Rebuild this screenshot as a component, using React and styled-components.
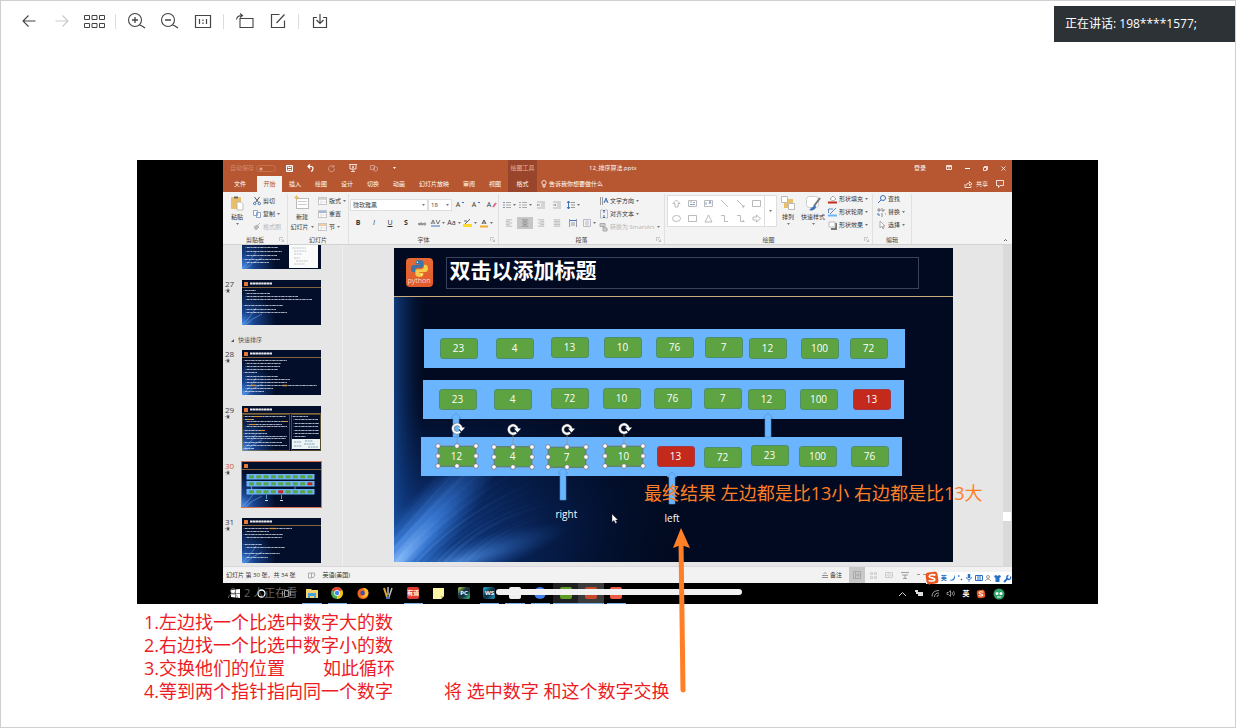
import React from "react";
import styled, { createGlobalStyle, css } from "styled-components";

const GlobalStyle = createGlobalStyle`
  * { box-sizing: border-box; }
  body {
    margin: 0;
    background: #fff;
    font-family: "Open Sans", "Noto Sans CJK SC", sans-serif;
  }
  button, select, input {
    font: inherit;
    color: inherit;
    margin: 0;
    padding: 0;
    border: 0;
    background: none;
    border-radius: 0;
  }
  svg { display: block; flex: none; overflow: visible; }
`;

/* ---------- viewer shell ---------- */

const Page = styled.main`
  position: relative;
  min-height: 100vh;
  border: 1px solid #cfcfcf;
  overflow: hidden;
`;

const Toolbar = styled.header`
  display: flex;
  align-items: center;
  height: 40px;
  padding-left: 11px;
  color: #444;
`;

const ToolButton = styled.button`
  display: flex;
  align-items: center;
  justify-content: center;
  width: 33px;
  height: 32px;
  color: ${(p) => (p.disabled ? "#c9c9c9" : "#444")};
`;

const ToolDivider = styled.span`
  width: 1px;
  height: 15px;
  margin: 0 4px;
  background: #dcdcdc;
`;

const Speaking = styled.aside`
  position: absolute;
  top: 5px;
  right: -1px;
  width: 182px;
  padding: 0 11px;
  background: #2d3236;
  color: #fff;
  font-size: 12px;
  line-height: 36px;
  white-space: nowrap;
`;

const Stage = styled.section`
  position: relative;
  width: 100%;
  max-width: 962px;
  margin: 119px auto 0;
`;

const Frame = styled.div`
  display: flex;
  justify-content: center;
  margin-right: 1px;
  padding: 0 86px;
  background: #000;
`;

const Notes = styled.div`
  padding: 7px 7px 0;
  color: #ed1c24;
  font-size: 18px;
  line-height: 23px;
  white-space: pre;
`;

const NoteLine = styled.p`
  display: flex;
  gap: ${(p) => p.$gap || 0}px;
  margin: 0;
`;

const Result = styled.p`
  position: absolute;
  left: 507px;
  top: 322px;
  margin: 0;
  color: #ff7f27;
  font-size: 18px;
  line-height: 23px;
  white-space: nowrap;
`;

const Pointer = styled.svg`
  position: absolute;
  left: 534px;
  top: 368px;
`;

/* ---------- presentation window ---------- */

const Desktop = styled.div`
  position: relative;
  display: flex;
  flex-direction: column;
  width: 100%;
  font-size: 6px;
  line-height: 8px;
  color: #333;
  white-space: nowrap;
`;

const TitleBar = styled.div`
  display: flex;
  height: 16px;
  background: #b65732;
  color: #fff;
`;

const QuickAccess = styled.div`
  display: flex;
  align-items: center;
  width: 285px;
  padding-left: 7px;
`;

const AutoSave = styled.label`
  display: flex;
  align-items: center;
  gap: 2px;
  width: 49px;
  color: #d58a6b;
`;

const Toggle = styled.input.attrs({ type: "checkbox" })`
  appearance: none;
  width: 20px;
  height: 7px;
  border: 1px solid #c8714f;
  border-radius: 4px;
  background: radial-gradient(circle at 4px 3px, #e0a58c 1px, transparent 2px);
`;

const Quick = styled.button`
  display: flex;
  align-items: center;
  justify-content: center;
  width: 21px;
  height: 16px;
  opacity: ${(p) => (p.$faint ? 0.4 : 1)};
`;

const ContextTitle = styled.div`
  width: 29px;
  background: #98452b;
  color: #e8b8a2;
  line-height: 16px;
  text-align: center;
`;

const FileName = styled.div`
  flex: 1;
  padding-left: 52px;
  line-height: 16px;
`;

const WindowControls = styled.div`
  display: flex;
  align-items: center;
`;

const ControlButton = styled.button`
  display: flex;
  align-items: center;
  justify-content: center;
  width: ${(p) => p.$width || 18}px;
  height: 16px;
`;

const Tabs = styled.nav`
  display: flex;
  height: 16px;
  background: #b65732;
  color: #fff;
`;

const Tab = styled.button`
  width: ${(p) => p.$width || 26}px;
  height: 16px;
  line-height: 16px;
  text-align: center;
  ${(p) => p.$active && css`background: #f3f3f3; color: #b65732;`}
  ${(p) => p.$context && css`background: #98452b;`}
`;

const Tell = styled.button`
  display: flex;
  align-items: center;
  gap: 2px;
  flex: 1;
  padding-left: 4px;
`;

const Share = styled.button`
  display: flex;
  align-items: center;
  gap: 4px;
  padding-right: 8px;
`;

const Ribbon = styled.div`
  display: flex;
  height: 53px;
  padding-top: 2px;
  background: #f3f3f3;
  border-bottom: 1px solid #d2d2d2;
`;

const Group = styled.section`
  position: relative;
  display: flex;
  flex-direction: column;
  width: ${(p) => p.$width}px;
  border-right: 1px solid #e0e0e0;
`;

const GroupBody = styled.div`
  display: flex;
  height: 42px;
  padding: ${(p) => p.$pad || "1px 2px 0"};
  gap: ${(p) => p.$gap || 0}px;
`;

const GroupLabel = styled.div`
  text-align: center;
  color: #444;
`;

const Launcher = styled.svg`
  position: absolute;
  right: 3px;
  bottom: 2px;
`;

const BigButton = styled.button`
  display: flex;
  flex-direction: column;
  align-items: center;
  width: ${(p) => p.$width || 24}px;
  gap: 2px;
`;

const Stack = styled.div`
  display: flex;
  flex-direction: column;
  gap: 5px;
  padding-top: ${(p) => p.$top || 0}px;
`;

const SmallButton = styled.button`
  display: flex;
  align-items: center;
  gap: 2px;
  height: 8px;
  color: ${(p) => (p.disabled ? "#b4b4b4" : "#333")};
`;

const Rows = styled.div`
  display: flex;
  flex-direction: column;
  gap: 6px;
  padding-top: 5px;
`;

const Row = styled.div`
  display: flex;
  align-items: center;
  height: 12px;
`;

const Cell = styled.button`
  display: flex;
  align-items: center;
  justify-content: center;
  gap: 2px;
  width: 16px;
  height: 12px;
  font-size: 7px;
  font-weight: ${(p) => (p.$bold ? 700 : 400)};
  background: ${(p) => (p.$on ? "#c6c6c6" : "none")};
`;

const FontSelect = styled.select`
  appearance: none;
  width: ${(p) => p.$width}px;
  height: 12px;
  padding-left: 2px;
  border: 1px solid #dedede;
  background: #fff;
  color: #444;
`;

const FontBox = styled.div`
  display: grid;
  grid-template-columns: 1fr 6px;
  align-items: center;
  background: #fff;

  ${FontSelect} { grid-area: 1 / 1 / 2 / 3; }
  svg { grid-area: 1 / 2; }
`;

const Gallery = styled.div`
  display: grid;
  grid-template-columns: repeat(6, 16px) 12px;
  grid-template-rows: 15px 15px;
  width: 110px;
  height: 32px;
  border: 1px solid #dedede;
  background: #fff;
`;

const ShapeCell = styled.button`
  display: flex;
  align-items: center;
  justify-content: center;
`;

const GalleryMore = styled.button`
  display: flex;
  align-items: center;
  justify-content: center;
  grid-column: 7;
  grid-row: 1 / 3;
  border-left: 1px solid #dedede;
`;

const Collapse = styled.button`
  margin-left: auto;
  align-self: flex-end;
  padding: 2px 4px;
`;

/* ---------- work area ---------- */

const Work = styled.div`
  display: flex;
  height: 321px;
  background: #e6e6e6;
`;

const Outline = styled.div`
  display: flex;
  flex-direction: column;
  justify-content: flex-end;
  width: 120px;
  padding-bottom: 3px;
  border-right: 1px solid #f0f0f0;
  overflow: hidden;
`;

const OutlineItem = styled.div`
  display: flex;
  flex: none;
  align-items: flex-start;
  height: ${(p) => (p.$last ? 45 : 56)}px;
  color: ${(p) => (p.$selected ? "#d2593a" : "#444")};
`;

const OutlineNumber = styled.div`
  display: flex;
  flex-direction: column;
  width: 19px;
  padding-left: 2px;
  font-size: 8px;
  line-height: 7px;
  gap: 1px;
`;

const ThumbSvg = styled.svg`
  outline: ${(p) => (p.$selected ? "1px solid #d9704f" : "none")};
`;

const SectionName = styled.div`
  display: flex;
  flex: none;
  align-items: flex-start;
  gap: 4px;
  height: 14px;
  padding-left: 8px;
  color: #555;
`;

const Editor = styled.div`
  display: flex;
  justify-content: center;
  flex: 1;
  padding-top: 3px;
`;

const Slide = styled.div`
  position: relative;
  width: 559px;
  height: 314px;
  overflow: hidden;
  background: #010a20;
`;

const Backdrop = styled.svg`
  position: absolute;
  inset: 0;
`;

const SlideHeader = styled.div`
  position: relative;
  display: flex;
  align-items: flex-start;
  gap: 13px;
  height: 49px;
  padding: 9px 12px 0;
  border-bottom: 1px solid #c8ab78;
`;

const SlideTitle = styled.h1`
  width: 473px;
  height: 32px;
  margin: 0;
  padding-left: 3px;
  border: 1px solid #36435a;
  color: #fff;
  font-size: 21px;
  font-weight: 700;
  line-height: 24px;
`;

const Logo = styled.div`
  display: flex;
  flex-direction: column;
  align-items: center;
  width: 27px;
  height: 29px;
  margin-top: 1px;
  padding-top: 2px;
  border-radius: 4px;
  background: linear-gradient(#e66a33, #e25a2b);
  color: #f6d9cd;
  font-size: 7px;
  line-height: 7px;
`;

const Band = styled.div`
  position: absolute;
  left: ${(p) => p.$x}px;
  top: ${(p) => p.$y}px;
  width: 481px;
  height: 39px;
  background: #6ab5fd;
`;

const NumberBox = styled.div`
  position: absolute;
  left: ${(p) => p.$x}px;
  top: ${(p) => p.$y}px;
  width: 38px;
  height: 21px;
  border: 1px solid ${(p) => (p.$red ? "#a5384a" : "#4d8f6c")};
  border-radius: 3px;
  background: ${(p) => (p.$red ? "#c32a1b" : "#5da341")};
  color: #fff;
  font-size: 10px;
  line-height: 18px;
  text-align: center;
`;

const Overlay = styled.svg`
  position: absolute;
  inset: 0;
`;

const Caption = styled.div`
  position: absolute;
  left: ${(p) => p.$x}px;
  top: ${(p) => p.$y}px;
  color: #fff;
  font-size: 10px;
  line-height: 14px;
`;

const ScrollTrack = styled.div`
  display: flex;
  flex-direction: column;
  justify-content: flex-end;
  width: 9px;
  padding-bottom: 45px;
  background: #dadada;
`;

const ScrollThumb = styled.div`
  height: 9px;
  margin-right: 1px;
  background: #fff;
`;

const Status = styled.footer`
  display: flex;
  align-items: center;
  height: 17px;
  padding-left: 3px;
  border-top: 1px solid #dcd6de;
  background: #f2f2f2;
`;

const StatusItem = styled.button`
  display: flex;
  align-items: center;
  gap: 2px;
  margin-right: ${(p) => p.$after || 0}px;
`;

const Spacer = styled.span`
  flex: 1;
`;

const View = styled.button`
  display: flex;
  align-items: center;
  justify-content: center;
  width: 16px;
  height: 16px;
  background: ${(p) => (p.$on ? "#c8c8c8" : "none")};
`;

const ZoomArea = styled.div`
  width: 99px;
  padding-left: 4px;
  color: #777;
`;

const InputBar = styled.div`
  position: absolute;
  right: 0;
  bottom: 20px;
  display: flex;
  align-items: center;
  justify-content: space-between;
  width: 86px;
  height: 12px;
  padding-right: 1px;
  background: #fff;
  color: #2871c8;
  font-weight: 700;
`;

const Taskbar = styled.div`
  display: flex;
  height: 21px;
  background: #000;
  color: #fff;
`;

const Apps = styled.div`
  display: grid;
  grid-template-columns: repeat(16, 1fr);
  grid-template-rows: 21px;
  width: 406px;
`;

const TaskButton = styled.button`
  display: flex;
  align-items: center;
  justify-content: center;
  margin: 0 ${(p) => (p.$bg ? 0 : 3)}px;
  border-bottom: 1px solid ${(p) => (p.$open ? "#7fb0e8" : "transparent")};
  background: ${(p) => p.$bg || "none"};
`;

const Tile = styled.span`
  width: 12px;
  height: 12px;
  border-radius: 2px;
  background: ${(p) => p.$bg};
  color: ${(p) => p.$fg || "#fff"};
  font-size: 6px;
  font-weight: 700;
  line-height: 12px;
  text-align: center;
`;

const Tray = styled.div`
  display: flex;
  align-items: center;
  margin-left: auto;
  padding-right: 3px;
`;

const TrayItem = styled.button`
  display: flex;
  align-items: center;
  justify-content: center;
  width: ${(p) => p.$width || 16}px;
  height: 20px;
  font-size: 7px;
  font-weight: 700;
`;

const HomeBar = styled.div`
  position: absolute;
  left: 273px;
  bottom: 9px;
  width: 246px;
  height: 6px;
  border-radius: 3px;
  background: #f1f1f1;
`;

const Watching = styled.div`
  position: absolute;
  left: 5px;
  bottom: 4px;
  display: flex;
  align-items: center;
  gap: 6px;
  color: #7d7d7d;
  font-size: 11px;
  line-height: 14px;
  opacity: 0.8;
`;

/* ---------- small drawings ---------- */

const Svg = ({ w = 10, h = w, box, children, ...rest }) => (
  <svg width={w} height={h} viewBox={box || `0 0 ${w} ${h}`} fill="none" stroke="currentColor" aria-hidden="true" {...rest}>
    {children}
  </svg>
);

const Caret = () => (
  <Svg w={3} h={2} stroke="none" fill="#777"><path d="M0 0h3L1.500 2z" /></Svg>
);

const Star = () => (
  <Svg w={5} h={5} fill="#555" stroke="none"><path d="M3 0l.6 1.800H5L4 3l.4 2L3 4 1.600 5 2 3 1 1.800h1.400zM0 2h1v.6H0z" /></Svg>
);

const Lines = ({ align = "left", color = "#999" }) => {
  const short = align === "left" ? "M1 3h5M1 7h5" : align === "right" ? "M4 3h5M4 7h5" : align === "center" ? "M2.500 3h5M2.500 7h5" : "M1 3h8M1 7h8";
  return <Svg w={8} h={8} box="0 0 10 10" stroke={color}><path d={`M1 1h8M1 5h8M1 9h8${short}`} /></Svg>;
};

const Bullets = ({ color = "#7d93b8" }) => (
  <Svg w={8} h={8}><path stroke={color} d="M0 1.500h2M0 4h2M0 6.500h2" /><path stroke="#aaa" d="M3 1.500h5M3 4h5M3 6.500h5" /></Svg>
);

const Indent = ({ flip }) => (
  <Svg w={8} h={8} stroke="#b5b5b5"><path d="M0 1h8M4 3h4M4 5h4M0 7h8" /><path d={flip ? "M0 4h3M2 3l1 1-1 1" : "M3 4H0M1 3L0 4l1 1"} stroke="#99a" /></Svg>
);

const Doc = ({ accent = "#aaa" }) => (
  <Svg w={9} h={8}><rect x=".5" y=".5" width="8" height="7" stroke="#c6c6c6" fill="#fff" /><path d="M1 2h7" stroke={accent} /><path d="M3 3v4M3 5h5" stroke="#ddd" /></Svg>
);

const Launch = () => (
  <Launcher width="5" height="5" viewBox="0 0 5 5" fill="none" stroke="#aaa"><path d="M.5 4V.5H4M2 2l2.500 2.500M4.500 2.500v2h-2" strokeWidth=".6" /></Launcher>
);

const Snake = ({ size }) => (
  <Svg w={size} h={size} box="0 0 18 18" stroke="none">
    <path fill="#3d74a8" d="M9 0C5.500 0 5 1.400 5 2.800V4.500h4.200v.7H3C1 5.200 0 7 0 9s1 4 2.700 4H4.400v-2.200c0-1.600 1.300-2.700 2.700-2.700h4c1.300 0 2.200-1 2.200-2.200V2.800C13.300 1 11.500 0 9 0z" />
    <path fill="#f6cb4a" d="M9 18c3.500 0 4-1.400 4-2.800v-1.700H8.800v-.7H15c2 0 3-1.800 3-3.800s-1-4-2.700-4h-1.700v2.200c0 1.600-1.300 2.700-2.700 2.700h-4c-1.300 0-2.200 1-2.200 2.200v3.100C4.700 17 6.500 18 9 18z" />
    <circle cx="6.800" cy="2.300" r=".8" fill="#fff" /><circle cx="11.200" cy="15.700" r=".8" fill="#fff" />
  </Svg>
);

const SogouMark = ({ size = 10 }) => (
  <Svg w={size} h={size} box="0 0 12 12" stroke="none"><rect width="12" height="12" rx="3" fill="#ea5520" transform="rotate(-8 6 6)" /><path d="M9.500 3.300C7 2.200 3.200 2.500 3.200 4.300c0 2 5.600 1.200 5.600 3.200 0 1.900-4 1.900-6.200.9" stroke="#fff" strokeWidth="1.600" fill="none" /></Svg>
);

/* ---------- slide data ---------- */

const bands = [
  { x: 30, y: 81, cells: [[46, 90, 23], [102, 90, 4], [157, 89, 13], [210, 89, 10], [262, 89, 76], [311, 89, 7], [355, 90, 12], [407, 90, 100], [456, 90, 72]] },
  { x: 29, y: 132, cells: [[45, 141, 23], [100, 141, 4], [157, 140, 72], [209, 140, 10], [260, 140, 76], [310, 140, 7], [354, 141, 12], [406, 141, 100], [459, 141, 13, true]] },
  { x: 27, y: 189, cells: [[44, 198, 12], [100, 198, 4], [154, 199, 7], [211, 198, 10], [263, 198, 13, true], [310, 199, 72], [357, 197, 23], [405, 198, 100], [457, 198, 76]] },
];

const selected = [[63, 208], [119, 209], [173, 209], [230, 208]];
const arrows = [[62, 165, 189], [374, 165, 189], [169, 220, 252], [278, 224, 256]];

const thumbLines = {
  26: [[3, 0, 40], [5, 6, 44], [3, 10, 22], [5, 14, 30], [5, 19, 38], [5, 23, 36], [5, 27, 40], [5, 31, 35], [3, 35, 38], [5, 38, 27]],
  27: [[3, 10, 14], [5, 13, 28], [5, 16, 56], [5, 19, 70], [3, 25, 41], [5, 29, 34], [5, 32, 45]],
  28: [[3, 10, 45], [5, 13, 39], [5, 16, 38], [5, 19, 36], [3, 22, 15], [5, 26, 36], [5, 29, 48], [5, 32, 45], [5, 35, 75], [5, 38, 31], [3, 41, 22]],
  29: [[3, 10, 44], [3, 13, 12], [5, 15, 45], [7, 18, 40], [5, 20, 45], [3, 24, 22], [3, 27, 25], [3, 30, 45], [5, 32, 44], [3, 36, 40], [5, 39, 45], [3, 42, 12], [51, 10, 66], [53, 13, 76], [53, 17, 77], [53, 20, 76], [53, 24, 77], [53, 27, 77], [53, 30, 64]],
  30: [],
  31: [[3, 10, 50], [5, 13, 27], [3, 16, 41], [5, 19, 40], [3, 26, 20], [5, 29, 43], [3, 35, 38], [5, 39, 26]],
};

function Thumb({ n, selected: isSelected }) {
  const id = `glow${n}`;
  return (
    <ThumbSvg $selected={isSelected} width="79" height="45" viewBox="0 0 79 45" role="img" aria-label={`幻灯片 ${n}`}>
      <defs>
        <radialGradient id={id} gradientUnits="userSpaceOnUse" cx="0" cy="44" r="34"><stop offset="0" stopColor="#4a8de6" /><stop offset=".35" stopColor="#19458f" /><stop offset="1" stopColor="#020e2a" /></radialGradient>
      </defs>
      <rect width="79" height="45" fill={`url(#${id})`} />
      <path d="M0 45Q6 40 14 28M3 45Q9 39 20 34" fill="none" stroke="#7fb2f5" strokeWidth="1" opacity=".5" />
      {n !== 26 && <g><path d="M0 7.500h79" stroke="#a37c3f" strokeWidth=".8" /><rect x="2" y="2" width="4" height="4" rx=".5" fill="#e8793a" /></g>}
      {n !== 26 && n !== 30 && <path d="M8 3.500h22" stroke="#fff" strokeWidth="2" strokeDasharray="2.500 .3" opacity=".9" />}
      {thumbLines[n].map(([a, y, b], i) => (
        <g key={i}><path d={`M${a} ${y + 0.5}H${b}`} stroke="#e8edf7" strokeWidth="1" strokeDasharray="2 .3 1 .2" opacity=".72" /><circle cx={a - 1} cy={y + 0.5} r=".4" fill="#fff" /></g>
      ))}
      {n === 26 && <g><rect x="47" y="-3" width="29" height="47" fill="#fbfbfb" /><path d="M50 24h14M52 27h13M52 30h8M52 34h6M54 37h12M52 40h11" stroke="#a9b3b8" strokeWidth=".7" strokeDasharray="2 .6" /></g>}
      {n === 28 && <path d="M9 35.500h5M41 35.500h4" stroke="#d89032" strokeWidth="1.300" />}
      {n === 31 && <path d="M28 10.500h6" stroke="#d89032" strokeWidth="1.300" />}
      {n === 29 && (
        <g>
          <path d="M.5 8.500h47v36H.5zM49.500 8.500h29v36h-29z" fill="none" stroke="#b89136" strokeWidth=".6" opacity=".8" />
          <path d="M12 10.500h8M5 13.500h5M42 15.500h4M7 18.500h6M18 24.500h5" stroke="#d89032" strokeWidth="1.200" />
          <rect x="50" y="33" width="28" height="10" fill="#eef4f6" />
          <path d="M52 36h7M52 40h8M63 35h8M62 38h11M66 41h10" stroke="#6d97aa" strokeWidth=".9" strokeDasharray="2 .6" />
        </g>
      )}
      {n === 30 && (
        <g>
          <path d="M9.500 24.500v3M53 24.500v3M24.500 33v4M39.500 33v4" stroke="#6ab5fd" strokeWidth=".8" />
          <path d="M23 38.500h3M38 38.500h3" stroke="#dde5f2" strokeWidth="1" />
          {[12, 19, 27].map((y, r) => (
            <g key={y}>
              <rect x="4.500" y={y} width="68" height="5.500" fill="#6ab5fd" />
              {[...Array(9)].map((_, c) => <rect key={c} x={7 + c * 7.3} y={y + 1.3} width="5" height="3" rx=".4" fill={(r === 1 && c === 8) || (r === 2 && c === 4) ? "#c32a1b" : "#5da341"} />)}
            </g>
          ))}
        </g>
      )}
    </ThumbSvg>
  );
}

function SlideCanvas() {
  return (
    <Slide>
      <Backdrop width="559" height="314" viewBox="0 0 559 314" aria-hidden="true">
        <defs>
          <radialGradient id="wide" gradientUnits="userSpaceOnUse" cx="0" cy="0" r="1" gradientTransform="translate(0 310) rotate(-14) scale(290 170)">
            <stop offset="0" stopColor="#1a55ac" /><stop offset=".35" stopColor="#0c3072" stopOpacity=".85" /><stop offset=".7" stopColor="#061d4c" stopOpacity=".5" /><stop offset="1" stopColor="#031030" stopOpacity="0" />
          </radialGradient>
          <radialGradient id="core" gradientUnits="userSpaceOnUse" cx="0" cy="0" r="1" gradientTransform="translate(0 318) rotate(-50) scale(165 34)">
            <stop offset="0" stopColor="#8cc0ff" /><stop offset=".4" stopColor="#3c80df" stopOpacity=".8" /><stop offset="1" stopColor="#1c55ac" stopOpacity="0" />
          </radialGradient>
          <radialGradient id="low" gradientUnits="userSpaceOnUse" cx="0" cy="0" r="1" gradientTransform="translate(60 316) rotate(-18) scale(120 20)">
            <stop offset="0" stopColor="#5a9cf0" stopOpacity=".8" /><stop offset="1" stopColor="#1c55ac" stopOpacity="0" />
          </radialGradient>
          <linearGradient id="edge" x1="0" x2="1" y1="0" y2="0"><stop offset="0" stopColor="#1550a0" stopOpacity=".7" /><stop offset="1" stopColor="#0a2862" stopOpacity="0" /></linearGradient>
          <radialGradient id="fade" gradientUnits="userSpaceOnUse" cx="0" cy="314" r="170"><stop offset="0" stopColor="#a5ceff" /><stop offset="1" stopColor="#4a8ce0" stopOpacity="0" /></radialGradient>
        </defs>
        <rect width="559" height="314" fill="url(#wide)" />
        <rect y="49" width="30" height="265" fill="url(#edge)" />
        <rect width="559" height="314" fill="url(#core)" />
        <rect width="559" height="314" fill="url(#low)" />
        <g fill="none" stroke="url(#fade)">
          {[...Array(16)].map((_, i) => (
            <path key={i} strokeWidth={1 + (i % 3)} opacity={0.08 + (i % 4) * 0.04} d={`M${i * 7 - 30} 318Q${12 + i * 8} ${270 - i} ${70 + i * 11} ${196 + i * 5}`} />
          ))}
        </g>
      </Backdrop>
      <SlideHeader>
        <Logo><Snake size={17} />python</Logo>
        <SlideTitle>双击以添加标题</SlideTitle>
      </SlideHeader>
      {bands.map((b) => <Band key={b.y} $x={b.x} $y={b.y} />)}
      {bands.map((b) => b.cells.map(([x, y, v, red]) => <NumberBox key={`${x}-${y}`} $x={x} $y={y} $red={red}>{v}</NumberBox>))}
      <Overlay width="559" height="314" viewBox="0 0 559 314" aria-hidden="true">
        {arrows.map(([x, a, b]) => (
          <path key={x} d={`M${x - 3} ${b}V${a + 5}H${x - 5}L${x} ${a}L${x + 5} ${a + 5}H${x + 3}V${b}z`} fill="#6ab5fd" stroke="#4d91d3" strokeWidth=".6" />
        ))}
        {selected.map(([x, y]) => (
          <g key={x}>
            <path d={`M${x} ${y - 10}V${y - 24}`} stroke="#8b9298" strokeWidth=".7" />
            <rect x={x - 19} y={y - 10} width="38" height="20" fill="none" stroke="#777" strokeWidth=".7" />
            {[[-19, -10], [0, -10], [19, -10], [-19, 0], [19, 0], [-19, 10], [0, 10], [19, 10]].map(([dx, dy]) => (
              <circle key={`${dx}${dy}`} cx={x + dx} cy={y + dy} r="2.300" fill="#fff" stroke="#75696f" strokeWidth=".7" />
            ))}
            <path d={`M${x + 3} ${y - 24.5}a4.200 4.200 0 1 1 1.200-3.500`} fill="none" stroke="#777" strokeWidth="3" />
            <path d={`M${x + 3} ${y - 24.5}a4.200 4.200 0 1 1 1.200-3.500`} fill="none" stroke="#fff" strokeWidth="1.900" />
            <path d={`M${x + 1} ${y - 28.5}h7l-3.500 4z`} fill="#fff" />
          </g>
        ))}
        <path d="M218 266v8l2-1.500 1.500 3 1.500-1-1.500-2.500h2.500z" fill="#fff" stroke="#222" strokeWidth=".4" />
      </Overlay>
      <Caption $x={162} $y={259}>right</Caption>
      <Caption $x={271} $y={263}>left</Caption>
    </Slide>
  );
}

/* ---------- ribbon ---------- */

function RibbonBar() {
  return (
    <Ribbon>
      <Group $width={65}>
        <GroupBody $gap={4}>
          <BigButton>
            <Svg w={14} h={16}><rect x="1" y="2" width="10" height="12" rx="1" fill="#eabf6c" stroke="none" /><path d="M4 2.500h4" stroke="#666" strokeWidth="2" /><path d="M7 7h4l2 2v6H7z" fill="#fff" stroke="#aaa" strokeWidth=".7" /></Svg>
            粘贴<Caret />
          </BigButton>
          <Stack $top={2}>
            <SmallButton><Svg w={8} h={8}><path d="M1.500 0l4 5.500M6.500 0l-4 5.500" stroke="#555" /><circle cx="1.700" cy="6.500" r="1.200" stroke="#3d72b5" /><circle cx="6.300" cy="6.500" r="1.200" stroke="#3d72b5" /></Svg>剪切</SmallButton>
            <SmallButton><Svg w={8} h={8} stroke="#8ba5c8"><path d="M.5.500h4v5h-4zM3.500 2.500h4v5h-4z" fill="#fff" /></Svg>复制 <Caret /></SmallButton>
            <SmallButton disabled><Svg w={8} h={8}><path d="M7 0L4 3M1 4l3-2 2 2-3 3z" fill="#bbb" /></Svg>格式刷</SmallButton>
          </Stack>
        </GroupBody>
        <GroupLabel>剪贴板</GroupLabel><Launch />
      </Group>

      <Group $width={61}>
        <GroupBody $gap={4}>
          <BigButton>
            <Svg w={16} h={16}><rect x="2.500" y="3.500" width="12" height="10" fill="#fff" stroke="#bbb" /><path d="M4 6.500h9M4 9.500h9" stroke="#ccc" /><path d="M2.500 0v5M0 2.500h5M1 1l3 3M4 1L1 4" stroke="#e5b64f" strokeWidth=".7" /></Svg>
            新建
            <SmallButton as="span">幻灯片 <Caret /></SmallButton>
          </BigButton>
          <Stack $top={2}>
            <SmallButton><Doc />版式 <Caret /></SmallButton>
            <SmallButton><Doc accent="#3d72b5" />重置</SmallButton>
            <SmallButton><Doc accent="#e8954a" />节 <Caret /></SmallButton>
          </Stack>
        </GroupBody>
        <GroupLabel>幻灯片</GroupLabel>
      </Group>

      <Group $width={150}>
        <GroupBody $pad="0 1px">
          <Rows>
            <Row>
              <FontBox><FontSelect $width={78} aria-label="字体" defaultValue="yahei"><option value="yahei">微软雅黑</option></FontSelect><Caret /></FontBox>
              <FontBox><FontSelect $width={24} aria-label="字号" defaultValue="18"><option>18</option></FontSelect><Caret /></FontBox>
              <Cell>A<Svg w={2} h={6} stroke="#3d72b5"><path d="M0 1l1-1 1 1" /></Svg></Cell>
              <Cell>A<Svg w={2} h={6} stroke="#3d72b5"><path d="M0 0l1 1 1-1" /></Svg></Cell>
              <Cell>A<Svg w={4} h={6}><path d="M0 5l3-4" stroke="#dd6f86" strokeWidth="2" /></Svg></Cell>
            </Row>
            <Row>
              <Cell $bold>B</Cell>
              <Cell><i>I</i></Cell>
              <Cell><u>U</u></Cell>
              <Cell $bold>S</Cell>
              <Cell><Svg w={8} h={5}><path d="M0 3h8" stroke="#555" /><path d="M1 2h1.500v2H1zM3.500 1v3H5V2M6 2h2M6 4h2" stroke="#888" strokeWidth=".6" /></Svg></Cell>
              <Cell><Svg w={9} h={8}><path d="M0 5l2-4 2 4M1 4h2M5 1l2 4 2-4" stroke="#555" strokeWidth=".8" /><path d="M0 7h9" stroke="#3d72b5" /></Svg><Caret /></Cell>
              <Cell>Aa<Caret /></Cell>
              <Cell><Svg w={9} h={8}><path d="M0 6.500h9" stroke="#ffd92e" strokeWidth="3" /><path d="M2 5l5-5M1 2h3" stroke="#666" /></Svg><Caret /></Cell>
              <Cell><Svg w={8} h={9}><path d="M2 5l2-4 2 4M3 4h2" stroke="#555" /><path d="M0 7.500h8" stroke="#f3ac28" strokeWidth="2" /></Svg><Caret /></Cell>
            </Row>
          </Rows>
        </GroupBody>
        <GroupLabel>字体</GroupLabel><Launch />
      </Group>

      <Group $width={166}>
        <GroupBody $pad="0 2px" $gap={3}>
          <Rows>
            <Row>
              <Cell><Bullets /><Caret /></Cell>
              <Cell><Bullets color="#aaa" /><Caret /></Cell>
              <Cell><Indent /></Cell>
              <Cell><Indent flip /></Cell>
              <Cell><Svg w={8} h={8}><path d="M1.500 0v8M0 2l1.500-2L3 2M0 6l1.500 2L3 6" stroke="#3d72b5" /><path d="M4 1.500h4M4 4h4M4 6.500h4" stroke="#999" /></Svg><Caret /></Cell>
            </Row>
            <Row>
              <Cell><Lines color="#b0b0b0" /></Cell>
              <Cell $on><Lines align="center" color="#888" /></Cell>
              <Cell><Lines align="right" color="#b0b0b0" /></Cell>
              <Cell><Lines align="full" color="#b0b0b0" /></Cell>
              <Cell><Svg w={8} h={8}><path d="M.5 0v8M7.500 0v8M2 4h4M2 6h4" stroke="#99a" /><path d="M1 1.500h6" stroke="#3d72b5" /></Svg></Cell>
              <Cell><Svg w={8} h={8} stroke="#bbc"><path d="M.5.500h7v7h-7zM4 1v6M2 3h1M5 3h1M2 5h1M5 5h1" /></Svg><Caret /></Cell>
            </Row>
          </Rows>
          <Stack $top={3}>
            <SmallButton><Svg w={8} h={8}><path d="M.5 0v8M2.500 0v8" stroke="#999" /><path d="M4 6l2-5 2 5M5 4h2" stroke="#3d72b5" /></Svg>文字方向 <Caret /></SmallButton>
            <SmallButton><Svg w={8} h={8}><path d="M3 0H.5v8H3M5 0h2.500v8H5" stroke="#bbb" /><path d="M4 0v3M4 5v3M3 1l1-1 1 1M3 7l1 1 1-1" stroke="#3d72b5" /></Svg>对齐文本 <Caret /></SmallButton>
            <SmallButton disabled><Svg w={8} h={8} stroke="#aaa"><path d="M0 .5h5v3H0zM3 4l4 1v3H3z" fill="#ccc" /></Svg>转换为 SmartArt <Caret /></SmallButton>
          </Stack>
        </GroupBody>
        <GroupLabel>段落</GroupLabel><Launch />
      </Group>

      <Group $width={208}>
        <GroupBody $pad="1px 1px 0 2px" $gap={1}>
          <Gallery>
            {[
              <path d="M4.500 1L8 4.500H6V8H3V4.500H1z" />,
              <g><path d="M.5 1.500h8v6h-8z" /><path d="M2 3h2M5 3.500h2M2 5.500h5" stroke="#6f8fbd" /></g>,
              <g><path d="M.5 1.500h8v6h-8z" /><path d="M5 5l1-3 1 3M2 3v3" stroke="#6f8fbd" /></g>,
              <path d="M1 1l7 7" />,
              <path d="M1 1l7 7M8 6v2H6" />,
              <path d="M.5 1.500h8v6h-8z" />,
              <ellipse cx="4.500" cy="4.500" rx="4" ry="3" />,
              <path d="M.5 1.500h8v6h-8z" />,
              <path d="M4.500 1L8 8H1z" />,
              <path d="M1 1.500h3.500v6H8" />,
              <path d="M1 1.500h3.500v6H8M7 6l1.500 1.500" />,
              <path d="M1 3h3.500V1L8.500 4.500 4.500 8V6H1z" />,
            ].map((shape, i) => <ShapeCell key={i} aria-label={`形状 ${i + 1}`}><Svg w={9} h={9} stroke="#aaa" strokeWidth=".8">{shape}</Svg></ShapeCell>)}
            <GalleryMore aria-label="更多形状"><Caret /></GalleryMore>
          </Gallery>
          <BigButton $width={20}>
            <Svg w={14} h={16}><rect x="3" y="4" width="9" height="9" fill="#eabf6c" stroke="none" /><path d="M.5 1.500h6v6h-6zM7.500 8.500h6v6h-6z" fill="#fff" stroke="#bbb" /></Svg>
            排列<Caret />
          </BigButton>
          <BigButton $width={28}>
            <Svg w={15} h={16}><rect x=".5" y="1.500" width="12" height="11" rx="3" fill="#fff" stroke="#ccc" /><path d="M14 3L8 11" stroke="#777" strokeWidth="2" /><path d="M9 10l-6 5c3 1 6 0 7-3z" fill="#3d72b5" stroke="none" /></Svg>
            快速样式<Caret />
          </BigButton>
          <Stack>
            <SmallButton><Svg w={9} h={9}><path d="M2 4l3-3 3 3-3 2z" fill="#fff" stroke="#888" strokeWidth=".7" /><path d="M0 7.500h9" stroke="#c32a1b" strokeWidth="2" /></Svg>形状填充 <Caret /></SmallButton>
            <SmallButton><Svg w={9} h={9}><path d="M2 6l6-6M.5 5V1H5" stroke="#5d87b8" /><path d="M0 7.500h9" stroke="#6ab5fd" strokeWidth="2" /></Svg>形状轮廓 <Caret /></SmallButton>
            <SmallButton><Svg w={9} h={9}><path d="M3 8h5V2" stroke="#777" strokeWidth="2" /><path d="M1 1h6v5H1z" fill="#fff" stroke="#bbb" /></Svg>形状效果 <Caret /></SmallButton>
          </Stack>
        </GroupBody>
        <GroupLabel>绘图</GroupLabel><Launch />
      </Group>

      <Group $width={39}>
        <GroupBody $pad="1px 5px">
          <Stack>
            <SmallButton><Svg w={8} h={8} stroke="#3d72b5"><circle cx="5" cy="3" r="2.500" /><path d="M3 5L0 8" /></Svg>查找</SmallButton>
            <SmallButton><Svg w={8} h={8}><path d="M0 1h2v2H0zM4 0v3h2V1M3 6h2M3 8h2M7 6h1" stroke="#666" strokeWidth=".7" /><path d="M0 5v2h2" stroke="#3d72b5" /></Svg>替换 <Caret /></SmallButton>
            <SmallButton><Svg w={8} h={8} stroke="#aaa"><path d="M2 0v7l2-2 1 3 1-1-1-2h2z" fill="#fff" /></Svg>选择 <Caret /></SmallButton>
          </Stack>
        </GroupBody>
        <GroupLabel>编辑</GroupLabel>
      </Group>
      <Collapse aria-label="折叠功能区"><Svg w={5} h={4} stroke="#666"><path d="M1 3l1.500-1.500L4 3" /></Svg></Collapse>
    </Ribbon>
  );
}

/* ---------- windows taskbar ---------- */

const apps = [
  { name: "开始", art: <Svg w={9} h={9} stroke="none" fill="#fff"><path d="M0 1l4-.5V4H0zM4.500.500L9 0v4H4.500zM0 4.500h4V8.500L0 8zM4.500 4.500H9V9l-4.500-.5z" /></Svg> },
  { name: "搜索", art: <Svg w={9} h={9} stroke="#fff" strokeWidth="1.300"><circle cx="4.500" cy="4.500" r="3.500" /></Svg> },
  { name: "任务视图", art: <Svg w={9} h={9} stroke="#aaa"><path d="M2.500 1.500h4v6h-4zM.5 2v5M8.500 2v5" /></Svg> },
  { name: "文件", open: true, art: <Svg w={12} h={10} stroke="none"><path d="M0 1h5l1 1h6v8H0z" fill="#f6d367" /><path d="M2 5h8v5H8V8H4v2H2z" fill="#4aa0df" /></Svg> },
  { name: "Chrome", open: true, art: <Svg w={12} h={12} stroke="none"><circle cx="6" cy="6" r="6" fill="#4caf50" /><path d="M6 6L.8 3A6 6 0 0 1 11.200 3z" fill="#e34133" /><path d="M6 6l5.200-3A6 6 0 0 1 6 12z" fill="#fbc116" /><circle cx="6" cy="6" r="2.700" fill="#4285f4" stroke="#fff" strokeWidth=".8" /></Svg> },
  { name: "Firefox", art: <Svg w={12} h={12} stroke="none"><circle cx="6" cy="6.500" r="5.500" fill="#f4641f" /><path d="M6 1c5-1 7 5 4 8-2 2-5 2-6 0 4 1 6-3 2-8z" fill="#fbbf2c" /><circle cx="5.500" cy="6" r="2.200" fill="#3a55b0" /></Svg> },
  { name: "画图", art: <Svg w={10} h={12}><path d="M1 1l3 9" stroke="#dfa73a" strokeWidth="2" /><path d="M9 1l-3 9M5 0v8" stroke="#bbb" strokeWidth="1.500" /><path d="M3 11h4" stroke="#3d72b5" strokeWidth="2" /></Svg> },
  { name: "有道", open: true, art: <Tile $bg="#df3a2d">有道</Tile> },
  { name: "便笺", art: <Svg w={11} h={11} stroke="none"><path d="M0 0h11v8l-3 3H0z" fill="#fbf4a3" /><path d="M11 8H8v3z" fill="#d4c869" /></Svg> },
  { name: "PyCharm", art: <Tile $bg="linear-gradient(135deg,#bde25a,#18313a 40%,#18313a 60%,#39cf9a)">PC</Tile> },
  { name: "WebStorm", open: true, art: <Tile $bg="linear-gradient(135deg,#1ec0e8,#103447 45%,#103447 60%,#22a8d8)">WS</Tile> },
  { name: "文本", open: true, art: <Tile $bg="#eee" $fg="#333">T</Tile> },
  { name: "会议", open: true, art: <Svg w={12} h={12} stroke="none"><circle cx="6" cy="6" r="6" fill="#3f7ff0" /><path d="M3 4h4v4H3zM8 5l2-1v4L8 7z" fill="#fff" /></Svg> },
  { name: "Camtasia", open: true, bg: "#202020", art: <Tile $bg="#5f9c25">C</Tile> },
  { name: "PowerPoint", open: true, bg: "#3b3b3b", art: <Tile $bg="#cb4a2c">P</Tile> },
  { name: "录制", open: true, art: <Tile $bg="#ef5b45">C</Tile> },
];

function PresentationWindow() {
  return (
    <Desktop>
      <TitleBar>
        <QuickAccess>
          <AutoSave>自动保存<Toggle /></AutoSave>
          <Quick aria-label="保存"><Svg w={7} h={7}><path d="M.5.500h6v6h-6zM2 .5v2h3v-2M2 6.500v-2h3v2" /></Svg></Quick>
          <Quick aria-label="撤消"><Svg w={7} h={8}><path d="M3 .5l-2 2 2 2M1 2.500h3q2 0 2 2t-2 3" strokeWidth="1.200" /></Svg></Quick>
          <Quick $faint aria-label="重复"><Svg w={7} h={7}><path d="M5.500 1.500a3 3 0 1 0 1 2M6 0v2H4" /></Svg></Quick>
          <Quick aria-label="放映"><Svg w={8} h={8} strokeWidth=".8"><path d="M0 .5h8M1 1v4h6V1M4 5v2M2 7.500h4M3 2l2 1-2 1" /></Svg></Quick>
          <Quick $faint aria-label="形状"><Svg w={8} h={7}><path d="M.5.500h4v4h-4z" /><circle cx="5.500" cy="4" r="2.200" /></Svg></Quick>
          <Quick aria-label="更多"><Svg w={3} h={3} fill="#fff" stroke="none"><path d="M0 0h3L1.500 2z" /></Svg></Quick>
        </QuickAccess>
        <ContextTitle>绘图工具</ContextTitle>
        <FileName>12_排序算法.pptx</FileName>
        <WindowControls>
          <ControlButton $width={40}>登录</ControlButton>
          <ControlButton aria-label="功能区选项"><Svg w={6} h={6} strokeWidth=".8"><path d="M.5.500h5v4h-5zM.5 1.500h5M3 2v2" /></Svg></ControlButton>
          <ControlButton aria-label="最小化"><Svg w={5} h={5}><path d="M0 2.500h5" /></Svg></ControlButton>
          <ControlButton aria-label="还原"><Svg w={5} h={5} strokeWidth=".8"><path d="M.5 1.500h3v3h-3zM1.500 1.500v-1h3v3h-1" /></Svg></ControlButton>
          <ControlButton aria-label="关闭"><Svg w={5} h={5} strokeWidth=".8"><path d="M.5.500l4 4M4.500.500l-4 4" /></Svg></ControlButton>
        </WindowControls>
      </TitleBar>
      <Tabs>
        <Tab $width={34}>文件</Tab>
        <Tab $width={25} $active>开始</Tab>
        {["插入", "绘图", "设计", "切换", "动画"].map((t) => <Tab key={t}>{t}</Tab>)}
        <Tab $width={44}>幻灯片放映</Tab>
        <Tab>审阅</Tab>
        <Tab>视图</Tab>
        <Tab $width={29} $context>格式</Tab>
        <Tell><Svg w={6} h={8} strokeWidth=".8"><circle cx="3" cy="2.700" r="2.200" /><path d="M2 5v2h2V5" /></Svg>告诉我你想要做什么</Tell>
        <Share><Svg w={8} h={7} strokeWidth=".8"><path d="M1 3v3.500h6V5M2.500 4.500q0-2.500 3-2.500V.500L8 3 5.500 4.500V3" /></Svg>共享</Share>
        <Share aria-label="批注"><Svg w={8} h={8} strokeWidth=".8"><path d="M.5.500h7v5H4l-1.500 2v-2h-2z" /></Svg></Share>
      </Tabs>
      <RibbonBar />
      <Work>
        <Outline>
          <OutlineItem><OutlineNumber /><Thumb n={26} /></OutlineItem>
          <OutlineItem><OutlineNumber>27<Star /></OutlineNumber><Thumb n={27} /></OutlineItem>
          <SectionName><Svg w={3} h={8} stroke="none" fill="#555"><path d="M3 3v3H0z" /></Svg>快速排序</SectionName>
          {[28, 29, 30, 31].map((n) => (
            <OutlineItem key={n} $selected={n === 30} $last={n === 31}>
              <OutlineNumber>{n}<Star /></OutlineNumber>
              <Thumb n={n} selected={n === 30} />
            </OutlineItem>
          ))}
        </Outline>
        <Editor><SlideCanvas /></Editor>
        <ScrollTrack><ScrollThumb /></ScrollTrack>
      </Work>
      <Status>
        <StatusItem $after={12}>幻灯片 第 30 张，共 34 张</StatusItem>
        <StatusItem $after={8}><Svg w={7} h={7} stroke="#999" strokeWidth=".8"><path d="M.5 1h3v5h-3zM3.500 1h3v2M4 5l1 1 2-3" /></Svg></StatusItem>
        <StatusItem>英语(美国)</StatusItem>
        <Spacer />
        <StatusItem $after={7}><Svg w={6} h={6} stroke="#777" strokeWidth=".8"><path d="M0 3.500h6M0 5.500h6M1.500 2L3 .500 4.500 2" /></Svg>备注</StatusItem>
        <View $on aria-label="普通视图"><Svg w={8} h={8} stroke="#aaa"><path d="M.5.500h7v7h-7zM2.500 1v6M4 3h2v2H4z" /></Svg></View>
        <View aria-label="浏览视图"><Svg w={7} h={7} stroke="#ccc"><path d="M.5.500h2v2h-2zM4.500.500h2v2h-2zM.5 4.500h2v2h-2zM4.500 4.500h2v2h-2z" /></Svg></View>
        <View aria-label="阅读视图"><Svg w={8} h={6} stroke="#ccc"><path d="M.5.500h7v5h-7zM4 1v4M2 2v2M6 2v2" /></Svg></View>
        <View aria-label="放映视图"><Svg w={8} h={7} stroke="#888" strokeWidth=".8"><path d="M0 .5h8M1 3h6M4 3v3M2 6.500h4" /></Svg></View>
        <ZoomArea><Svg w={20} h={4} stroke="#999"><path d="M0 1.500h3M6 1.500h14" /></Svg></ZoomArea>
      </Status>
      <Taskbar>
        <Apps>
          {apps.map((a) => <TaskButton key={a.name} aria-label={a.name} $open={a.open} $bg={a.bg}>{a.art}</TaskButton>)}
        </Apps>
        <Tray>
          <TrayItem aria-label="展开"><Svg w={7} h={4} stroke="#ccc"><path d="M0 4l3.500-3.500L7 4" /></Svg></TrayItem>
          <TrayItem $width={17} aria-label="电源"><Svg w={8} h={7} stroke="none" fill="#ddd"><path d="M1 2h7v4H3V4H1zM0 0h3v2H0z" /></Svg></TrayItem>
          <TrayItem aria-label="网络"><Svg w={7} h={7} stroke="#999"><path d="M0 6.500q0-6 7-6M2.500 7q0-4 4.500-4M5 7q0-2 2-2" /></Svg></TrayItem>
          <TrayItem aria-label="音量"><Svg w={9} h={7} stroke="#aaa" strokeWidth=".8"><path d="M0 2.500h1.500l2-2v6l-2-2H0zM5 2q1 1.500 0 3M6.500 1q2 2.500 0 5" /></Svg></TrayItem>
          <TrayItem $width={14}>英</TrayItem>
          <TrayItem aria-label="输入法"><SogouMark size={8} /></TrayItem>
          <TrayItem $width={20} aria-label="加速"><Svg w={12} h={12} stroke="none"><circle cx="6" cy="6" r="5.500" fill="#2ea36a" /><circle cx="4" cy="5.500" r="1.500" fill="#fff" /><circle cx="8" cy="5.500" r="1.500" fill="#fff" /><path d="M4 9h4" stroke="#fff" /></Svg></TrayItem>
        </Tray>
      </Taskbar>
      <InputBar>
        <SogouMark size={12} />英
        <Svg w={6} h={6} stroke="none" fill="#2871c8"><path d="M5 0q1 5-5 5 5 2 6-2 0-2-1-3z" /></Svg>
        <Svg w={5} h={6}><path d="M0 1h1.500M3 4l1 1" strokeWidth="1.500" /></Svg>
        <Svg w={6} h={8}><path d="M3 0v4" strokeWidth="2.500" /><path d="M.5 3q0 2.500 2.500 2.500T5.500 3M3 5.500V8" strokeWidth=".8" /></Svg>
        <Svg w={8} h={6}><path d="M.5.500h7v5h-7zM2 2h4M2 4h4" /></Svg>
        <Svg w={6} h={7} stroke="#999"><circle cx="3" cy="2" r="1.500" /><path d="M0 6q3-4 6 0" /></Svg>
        <Svg w={7} h={7} stroke="none" fill="#2871c8"><path d="M2 0l1.500 1L5 0l2 1-1 2-.5-.5V7h-4V2.500L1 3 0 1z" /></Svg>
        <Svg w={7} h={7}><path d="M0 7l4-4" strokeWidth="1.800" /><path d="M6.500 1.500a2 2 0 1 1-2-1" strokeWidth="1.300" /></Svg>
      </InputBar>
      <HomeBar />
      <Watching><Svg w={10} h={10}><circle cx="5" cy="3" r="2.500" /><path d="M.5 10q0-4 4.500-4t4.500 4" /></Svg>2 人正在看</Watching>
    </Desktop>
  );
}

export default function App() {
  return (
    <Page>
      <GlobalStyle />
      <Toolbar>
        <ToolButton aria-label="后退"><Svg w={14} h={12}><path d="M13.500 6H1M6.500.500L1 6l5.500 5.500" strokeWidth="1.100" /></Svg></ToolButton>
        <ToolButton disabled aria-label="前进"><Svg w={14} h={12}><path d="M.5 6H13M7.500.500L13 6l-5.500 5.500" strokeWidth="1.100" /></Svg></ToolButton>
        <ToolButton aria-label="缩略图"><Svg w={21} h={13}><path d="M.5.500h5v4h-5zM8 .5h5v4H8zM15.500.500h5v4h-5zM.5 8.500h5v4h-5zM8 8.500h5v4H8zM15.500 8.500h5v4h-5z" /></Svg></ToolButton>
        <ToolDivider />
        <ToolButton aria-label="放大"><Svg w={17} h={16}><circle cx="7" cy="7" r="6.500" strokeWidth="1.100" /><path d="M4 7h6M7 4v6M11.500 12l2.500 1 3 2" strokeWidth="1.300" /></Svg></ToolButton>
        <ToolButton aria-label="缩小"><Svg w={17} h={16}><circle cx="7" cy="7" r="6.500" strokeWidth="1.100" /><path d="M4 7h6M11.500 12l2.500 1 3 2" strokeWidth="1.300" /></Svg></ToolButton>
        <ToolButton aria-label="原始大小"><Svg w={16} h={13}><path d="M.5.500h15v12H.500z" strokeWidth="1.200" /><path d="M4.500 4v5M11.500 4v5M8 4.500V6M8 7.500V9" strokeWidth="1.200" /></Svg></ToolButton>
        <ToolDivider />
        <ToolButton aria-label="旋转"><Svg w={18} h={16}><path d="M4 5.500h13v9H4zM.5 6.500Q1 2.500 6 2.500M4 .500l2.500 2L4 4.500" strokeWidth="1.100" /></Svg></ToolButton>
        <ToolButton aria-label="编辑"><Svg w={14} h={14}><path d="M8.500.500h-8v13h13v-7M5.500 9L13.500.500" strokeWidth="1.200" /></Svg></ToolButton>
        <ToolDivider />
        <ToolButton aria-label="下载"><Svg w={14} h={15}><path d="M4 3.500H.500v10h13v-10H10M7 0v9M3.500 6L7 9.500 10.500 6" strokeWidth="1.200" /></Svg></ToolButton>
      </Toolbar>
      <Speaking>正在讲话: 198****1577;</Speaking>
      <Stage>
        <Frame><PresentationWindow /></Frame>
        <Result>最终结果 左边都是比13小 右边都是比13大</Result>
        <Pointer width="20" height="164" viewBox="0 0 20 164" aria-hidden="true">
          <path d="M10 14L12 162" stroke="#ff7f27" strokeWidth="5" strokeLinecap="round" />
          <path d="M10 0l9 20-9-3-8 3z" fill="#ff7f27" />
        </Pointer>
        <Notes>
          <NoteLine>1.左边找一个比选中数字大的数</NoteLine>
          <NoteLine>2.右边找一个比选中数字小的数</NoteLine>
          <NoteLine $gap={38}><span>3.交换他们的位置</span><span>如此循环</span></NoteLine>
          <NoteLine $gap={51}><span>4.等到两个指针指向同一个数字</span><span>将 选中数字 和这个数字交换</span></NoteLine>
        </Notes>
      </Stage>
    </Page>
  );
}
